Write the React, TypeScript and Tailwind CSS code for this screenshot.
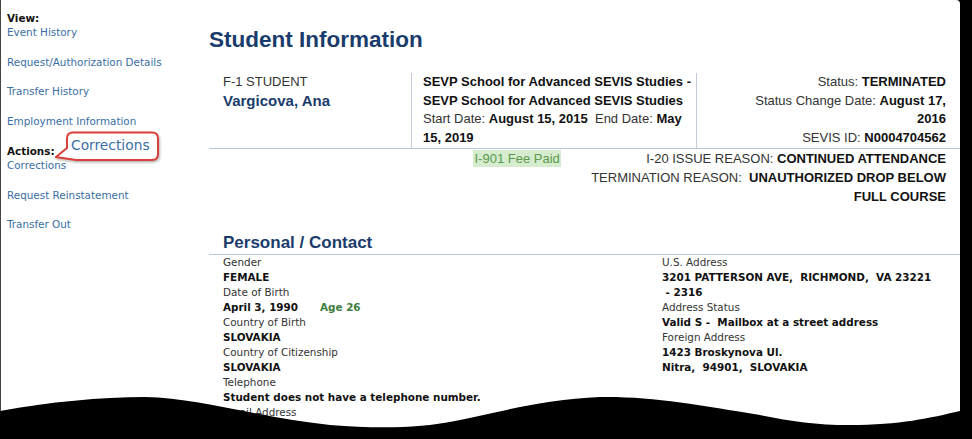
const nav = ['Event History', 'Request/Authorization Details', 'Transfer History', 'Employment Information'];
const actions = ['Corrections', 'Request Reinstatement', 'Transfer Out'];

function Field({ label, children }: { label: string; children: React.ReactNode }) {
  return (
    <>
      <div className="text-[#333]">{label}</div>
      <div className="font-bold text-[#111] whitespace-pre">{children}</div>
    </>
  );
}

export default function App() {
  return (
    <div className="relative w-[972px] h-[439px] bg-black overflow-hidden">
      <div className="flex w-[960px] h-full bg-white border-l border-[#444] rounded-tr-[4px]">
        <aside className="w-[208px] shrink-0 pl-[6px] pt-[11px] font-['Verdana','DejaVu_Sans',sans-serif] text-[10.4px] leading-[14px]">
          <div className="font-bold text-[#111]">View:</div>
          {nav.map((n, i) => (
            <a key={n} className={`block text-[#3a6ea5] ${i ? 'mt-[15.5px]' : ''}`}>{n}</a>
          ))}
          <div className="font-bold text-[#111] mt-[16.5px]">Actions:</div>
          {actions.map((n, i) => (
            <a key={n} className={`block text-[#3a6ea5] ${i ? 'mt-[15.5px]' : ''}`}>{n}</a>
          ))}
        </aside>

        <main className="flex-1 pt-[27px] font-['Arial','Liberation_Sans',sans-serif] text-[13px] text-[#333]">
          <h1 className="text-[22.5px] leading-[26px] font-bold text-[#1a3c6c]">Student Information</h1>

          <div className="mt-[20px] flex border-b border-[#b9c6d6] leading-[18.7px] whitespace-nowrap">
            <div className="w-[202px] pl-[14px]">
              <div>F-1 STUDENT</div>
              <div className="text-[15px] font-bold text-[#1a3c6c]">Vargicova, Ana</div>
            </div>
            <div className="w-[285px] pl-[11px] border-l border-[#c3cdd9]">
              <div className="font-bold text-[#111]">SEVP School for Advanced SEVIS Studies -</div>
              <div className="font-bold text-[#111]">SEVP School for Advanced SEVIS Studies</div>
              <div className="whitespace-pre">Start Date: <b className="text-[#111]">August 15, 2015</b>  End Date: <b className="text-[#111]">May</b></div>
              <div className="font-bold text-[#111]">15, 2019</div>
            </div>
            <div className="flex-1 pr-[14px] text-right border-l border-[#c3cdd9]">
              <div>Status: <b className="text-[#111]">TERMINATED</b></div>
              <div>Status Change Date: <b className="text-[#111]">August 17,</b></div>
              <div className="font-bold text-[#111]">2016</div>
              <div>SEVIS ID: <b className="text-[#111]">N0004704562</b></div>
            </div>
          </div>

          <div className="flex leading-[19px] whitespace-nowrap">
            <div className="w-[360px] pl-[264px]">
              <span className="inline-block px-[1.5px] bg-[#d6ecce] text-[#5b9a4c] leading-[17px]">I-901 Fee Paid</span>
            </div>
            <div className="flex-1 pr-[14px] text-right">
              <div>I-20 ISSUE REASON: <b className="text-[#111]">CONTINUED ATTENDANCE</b></div>
              <div className="whitespace-pre">TERMINATION REASON:  <b className="text-[#111]">UNAUTHORIZED DROP BELOW</b></div>
              <div className="font-bold text-[#111]">FULL COURSE</div>
            </div>
          </div>

          <h2 className="mt-[27px] pl-[14px] pb-[1px] text-[17px] leading-[20px] font-bold text-[#1a3c6c] border-b border-[#b9c6d6]">
            Personal / Contact
          </h2>

          <div className="flex pl-[14px] pt-[0.5px] font-['Verdana','DejaVu_Sans',sans-serif] text-[10.4px] leading-[15px]">
            <div className="w-[439px]">
              <Field label="Gender">FEMALE</Field>
              <div className="text-[#333]">Date of Birth</div>
              <div className="font-bold text-[#111]">
                <span className="inline-block w-[97px]">April 3, 1990</span>
                <span className="text-[#3e7d3e]">Age 26</span>
              </div>
              <Field label="Country of Birth">SLOVAKIA</Field>
              <Field label="Country of Citizenship">SLOVAKIA</Field>
              <Field label="Telephone">Student does not have a telephone number.</Field>
              <div className="text-[#333]">Email Address</div>
            </div>
            <div className="flex-1">
              <div className="text-[#333]">U.S. Address</div>
              <div className="font-bold text-[#111] whitespace-pre">3201 PATTERSON AVE,  RICHMOND,  VA 23221</div>
              <div className="font-bold text-[#111] whitespace-pre"> - 2316</div>
              <Field label="Address Status">Valid S -  Mailbox at a street address</Field>
              <div className="text-[#333]">Foreign Address</div>
              <div className="font-bold text-[#111]">1423 Broskynova Ul.</div>
              <div className="font-bold text-[#111] whitespace-pre">Nitra,  94901,  SLOVAKIA</div>
            </div>
          </div>
        </main>
      </div>

      {/* callout annotation */}
      <div className="absolute left-[55px] top-[130px] w-[108px] h-[34px]">
        <svg className="absolute inset-0" width="108" height="34" viewBox="0 0 108 34">
          <defs>
            <filter id="sh" x="-10%" y="-20%" width="130%" height="150%">
              <feDropShadow dx="1" dy="1.5" stdDeviation="1" floodColor="#000" floodOpacity="0.3" />
            </filter>
          </defs>
          <path
            d="M18 2.5 H97 Q103 2.5 103 8.5 V24 Q103 30 97 30 H21 L1 27 L12 18 V8.5 Q12 2.5 18 2.5 Z"
            fill="#fff"
            stroke="#d9403a"
            strokeWidth="2"
            filter="url(#sh)"
          />
        </svg>
        <span className="absolute left-[16px] top-[6px] font-['Verdana','DejaVu_Sans',sans-serif] text-[13.8px] leading-[18px] text-[#3a6ea5]">
          Corrections
        </span>
      </div>

      {/* torn bottom edge */}
      <svg className="absolute inset-0 pointer-events-none" width="972" height="439" viewBox="0 0 972 439">
        <path
          d="M0 411 C50 402 100 397 145 397 C200 398 260 418 330 425 C380 429 420 428 455 421 C500 412 545 399 600 397 C650 396 700 405 760 415 C790 421 815 425 850 425 C900 425 930 418 960 411 L972 411 L972 439 L0 439 Z"
          fill="#000"
        />
      </svg>
    </div>
  );
}
